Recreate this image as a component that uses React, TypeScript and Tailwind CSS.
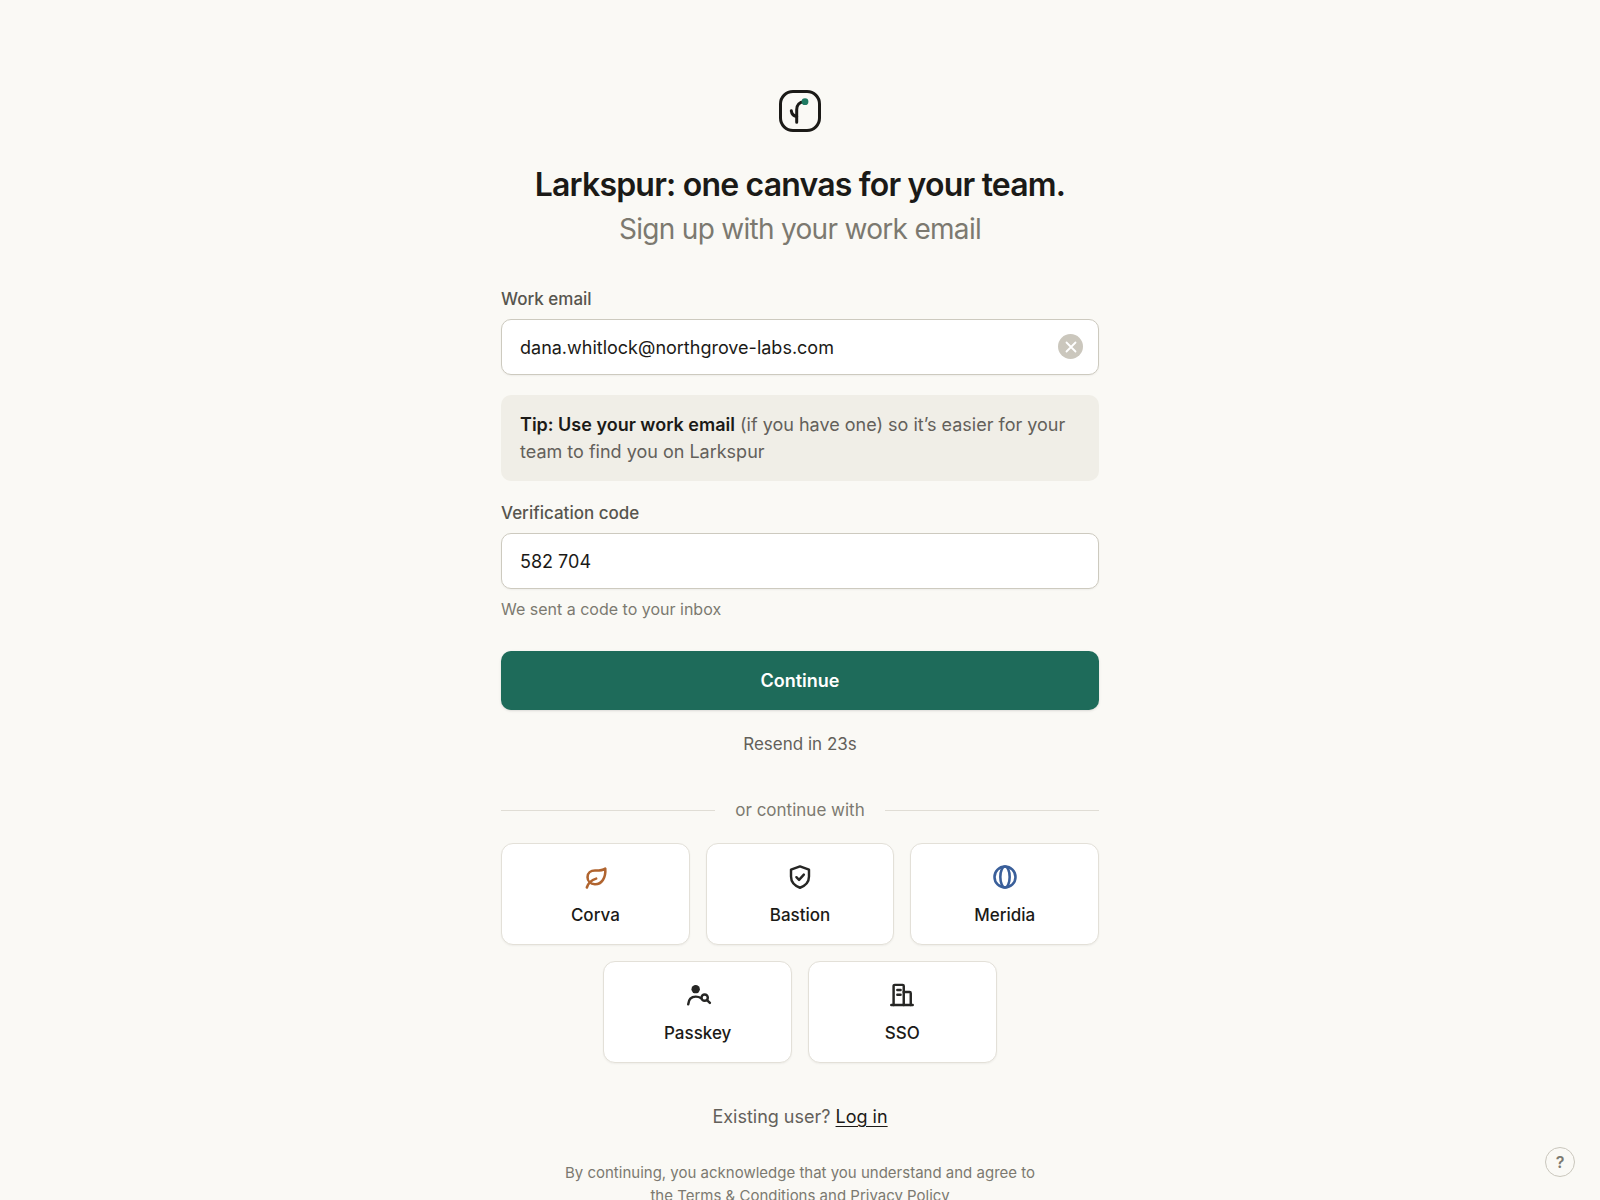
import { useState } from 'react';
import type { ReactNode } from 'react';

interface Provider {
  name: string;
  icon: ReactNode;
}

const LeafIcon = () => (
  <svg viewBox="0 0 24 24" className="h-7 w-7 text-[#b0642f]" fill="none" stroke="currentColor" strokeWidth="2.2" strokeLinecap="round" strokeLinejoin="round">
    <path d="M20.8 4.8C21.4 12.7 17.8 18.4 11.8 18.2c-3.6-.1-6.200-2.600-6.200-6 0-3.700 2.800-5.700 6.400-5.700 3 0 6 .2 8.800-1.700Z" />
    <path d="M5 21c1-3.200 3.800-6.300 8-7.600" />
  </svg>
);

const ShieldIcon = () => (
  <svg viewBox="0 0 24 24" className="h-7 w-7 text-[#262624]" fill="none" stroke="currentColor" strokeWidth="2.1" strokeLinecap="round" strokeLinejoin="round">
    <path d="m12 2.900 7.700 2.700v6c0 4.700-3.100 7.900-7.700 9.600-4.600-1.700-7.700-4.900-7.700-9.600v-6Z" />
    <path d="m8.900 12.200 2.300 2.300 4.100-4.500" />
  </svg>
);

const GlobeIcon = () => (
  <svg viewBox="0 0 24 24" className="h-7 w-7 text-[#3a5f9a]" fill="none" stroke="currentColor" strokeWidth="2.200">
    <circle cx="12" cy="12" r="9" />
    <ellipse cx="12" cy="12" rx="4" ry="9" />
  </svg>
);

const PasskeyIcon = () => (
  <svg viewBox="0 0 24 24" className="h-7 w-7 text-[#262624]" fill="none" stroke="currentColor" strokeWidth="2.1" strokeLinecap="round">
    <circle cx="10" cy="7" r="3.600" fill="currentColor" stroke="none" />
    <path d="M3.600 20c.3-4.400 2.800-6.600 6.500-6.600 1.800 0 3.200.4 4.300 1.200" />
    <circle cx="17.700" cy="14.300" r="2.700" />
    <path d="m19.700 16.300 2.500 2.500" />
  </svg>
);

const BuildingIcon = () => (
  <svg viewBox="0 0 24 24" className="h-7 w-7 text-[#262624]" fill="none" stroke="currentColor" strokeWidth="2.1" strokeLinecap="round" strokeLinejoin="round">
    <path d="M2.800 20.500h18.400" />
    <path d="M4.800 20.500V4.300a1 1 0 0 1 1-1h6.700a1 1 0 0 1 1 1v16.200" />
    <path d="M13.500 9.500h5a1 1 0 0 1 1 1v10" />
    <path d="M8 7.700h2.800M8 11.700h2.800" />
  </svg>
);

const providers: Provider[] = [
  { name: 'Corva', icon: <LeafIcon /> },
  { name: 'Bastion', icon: <ShieldIcon /> },
  { name: 'Meridia', icon: <GlobeIcon /> },
  { name: 'Passkey', icon: <PasskeyIcon /> },
  { name: 'SSO', icon: <BuildingIcon /> },
];

const Logo = () => (
  <svg viewBox="0 0 42 42" className="h-[42px] w-[42px]" fill="none" stroke="#1b1a17" strokeWidth="3" strokeLinecap="round" aria-label="Larkspur" role="img">
    <rect x="1.500" y="1.500" width="39" height="39" rx="12.500" />
    <path d="M17.700 32.300V19.500c0-4.600 2.800-7.600 7.300-7.800" />
    <path d="M12.300 20.800c.4 3.200 2.200 5.200 5.400 5.600" />
    <circle cx="26" cy="11.700" r="3.400" fill="#1f7a62" stroke="none" />
  </svg>
);

export default function App() {
  const [email, setEmail] = useState('dana.whitlock@northgrove-labs.com');
  const [code, setCode] = useState('582 704');

  return (
    <div className="min-h-screen bg-[#faf9f5] px-6 pt-[90px] pb-12 font-['Inter',sans-serif] text-[#1b1a17]">
      <main className="mx-auto flex w-full max-w-[598px] flex-col">
        <header className="flex flex-col items-center text-center">
          <Logo />
          <h1 className="mt-[29px] text-[32px] leading-[48px] font-semibold tracking-tight">
            Larkspur: one canvas for your team.
          </h1>
          <p className="text-[28px] leading-10 tracking-tight text-[#7c7970]">Sign up with your work email</p>
        </header>

        <form className="mt-[38px] flex flex-col" onSubmit={(e) => e.preventDefault()}>
          <label htmlFor="email" className="text-[17px] leading-6 font-medium text-[#57554e]">
            Work email
          </label>
          <div className="relative mt-2">
            <input
              id="email"
              type="email"
              value={email}
              onChange={(e) => setEmail(e.target.value)}
              className="h-14 w-full rounded-[10px] border border-[#cdcabf] bg-white pr-14 pl-[18px] text-[18px] shadow-xs outline-none focus:border-[#1e6b5a]"
            />
            <button
              type="button"
              aria-label="Clear email"
              onClick={() => setEmail('')}
              className="absolute top-[15px] right-4 flex h-[25px] w-[25px] items-center justify-center rounded-full bg-[#cbc7bd] text-white"
            >
              <svg viewBox="0 0 12 12" className="h-3 w-3" fill="none" stroke="currentColor" strokeWidth="1.800" strokeLinecap="round">
                <path d="m1.500 1.500 9 9M10.500 1.500l-9 9" />
              </svg>
            </button>
          </div>

          <p className="mt-5 rounded-[10px] bg-[#f0eee7] px-[19px] py-4 text-[18px] leading-[27px] text-[#63605a]">
            <strong className="font-semibold text-[#1b1a17]">Tip: Use your work email</strong> (if you have one) so it’s
            easier for your team to find you on Larkspur
          </p>

          <label htmlFor="code" className="mt-5 text-[17px] leading-6 font-medium text-[#57554e]">
            Verification code
          </label>
          <input
            id="code"
            type="text"
            inputMode="numeric"
            value={code}
            onChange={(e) => setCode(e.target.value)}
            className="mt-2 h-14 w-full rounded-[10px] border border-[#cdcabf] bg-white px-[18px] text-[18px] shadow-xs outline-none focus:border-[#1e6b5a]"
          />
          <p className="mt-2 text-[16px] leading-6 text-[#7c7970]">We sent a code to your inbox</p>

          <button
            type="submit"
            className="mt-[30px] h-[59px] rounded-[10px] bg-[#1e6b5a] text-[18px] font-semibold text-white shadow-sm hover:bg-[#195b4c]"
          >
            Continue
          </button>
          <p className="mt-5 text-center text-[17px] leading-7 text-[#63605a]">Resend in 23s</p>
        </form>

        <div className="mt-[38px] flex items-center gap-5 text-[17px] leading-7 text-[#7c7970]">
          <span className="h-px flex-1 bg-[#e0ddd5]" />
          or continue with
          <span className="h-px flex-1 bg-[#e0ddd5]" />
        </div>

        <div className="mt-[19px] flex flex-wrap justify-center gap-4">
          {providers.map(({ name, icon }) => (
            <button
              key={name}
              type="button"
              className="flex h-[102px] w-[calc((100%-32px)/3)] flex-col items-center justify-center gap-3 rounded-xl border border-[#e3e0d8] bg-white pt-px text-[17px] leading-6 font-medium shadow-xs hover:bg-[#fdfcfa]"
            >
              {icon}
              {name}
            </button>
          ))}
        </div>

        <footer className="mt-10 text-center">
          <p className="text-[18px] leading-7 text-[#63605a]">
            Existing user?{' '}
            <a href="#login" className="text-[#1b1a17] underline underline-offset-3">
              Log in
            </a>
          </p>
          <p className="mx-auto mt-[30px] max-w-[490px] text-[15px] leading-[23px] text-[#7c7970]">
            By continuing, you acknowledge that you understand and agree to the Terms &amp; Conditions and Privacy Policy
          </p>
        </footer>
      </main>

      {/* Floating help */}
      <button
        type="button"
        aria-label="Help"
        className="fixed right-[25px] bottom-[23px] flex h-[30px] w-[30px] items-center justify-center rounded-full border border-[#c9c6bc] bg-[#faf9f5] text-[16px] font-semibold text-[#7c7970]"
      >
        ?
      </button>
    </div>
  );
}
